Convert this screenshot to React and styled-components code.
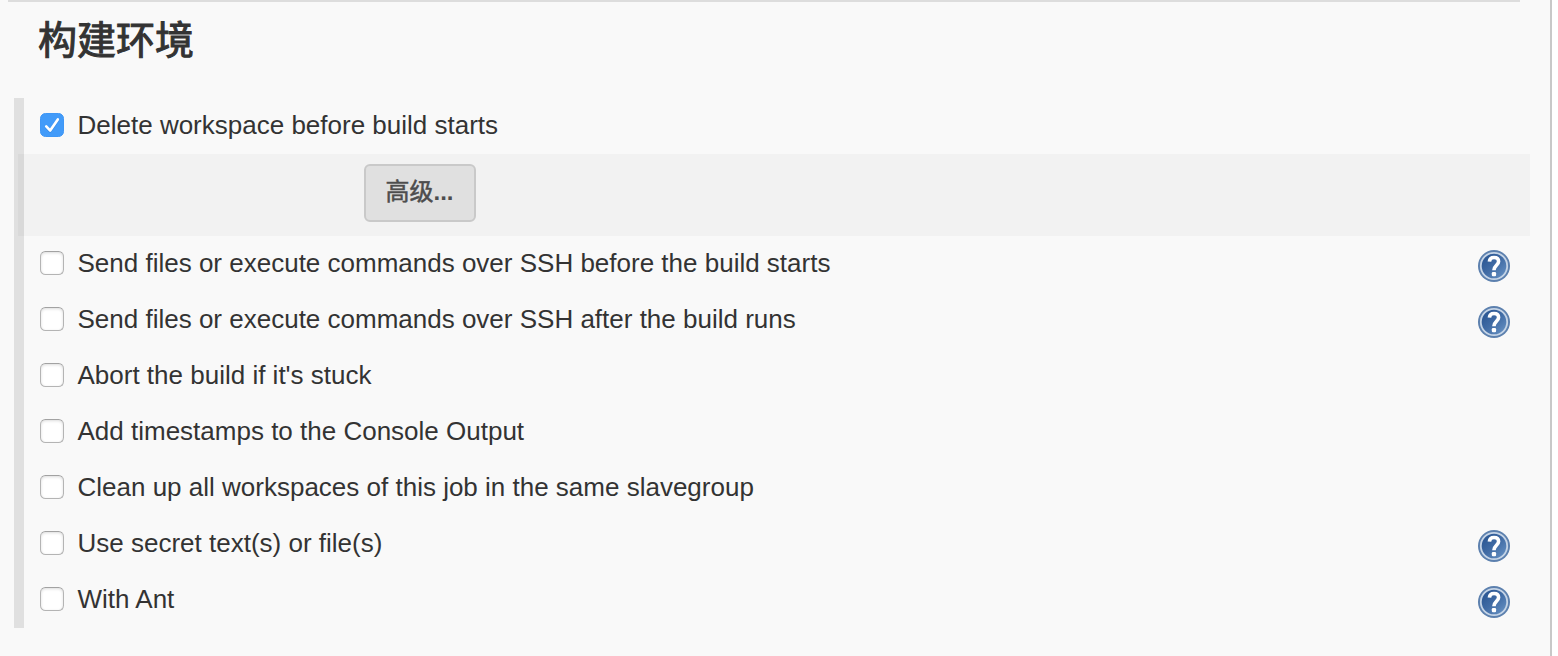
import React, { useState } from 'react';
import styled, { createGlobalStyle } from 'styled-components';

const GlobalStyle = createGlobalStyle`
  body {
    margin: 0;
    background: #fff;
    overflow: hidden;
  }

  * {
    box-sizing: border-box;
  }
`;

const Page = styled.main`
  width: 1552px;
  height: 656px;
  background: #f9f9f9;
  border-right: 2px solid #c8c8c8;
  color: #333;
  font-family: "Liberation Sans", "Noto Sans CJK SC", sans-serif;
`;

const Divider = styled.div`
  width: 1512px;
  height: 2px;
  margin-left: 8px;
  background: #ddd;
`;

const Title = styled.h2`
  height: 96px;
  margin: 0;
  padding: 7px 0 0 38px;
  font-family: "Noto Sans CJK SC", sans-serif;
  font-size: 39px;
  font-weight: 400;
  line-height: 56px;
  -webkit-text-stroke: 1px #333;
`;

const Options = styled.section`
  width: 1516px;
  margin-left: 14px;
  border-left: 10px solid #e0e0e0;
`;

const Row = styled.div`
  display: flex;
  align-items: center;
  justify-content: space-between;
  height: 56px;
  padding: 0 20px 0 16px;
`;

const Label = styled.label`
  display: flex;
  align-items: center;
  gap: 13.5px;
  padding-bottom: 2px;
  font-size: 26px;
  line-height: 30px;
  white-space: nowrap;
  cursor: pointer;
`;

const Checkbox = styled.input`
  appearance: none;
  flex: none;
  width: 24px;
  height: 24px;
  margin: 0;
  border: 1px solid #b4b4b4;
  border-top-color: #a2a2a2;
  border-radius: 5.5px;
  background: #fff;
  box-shadow: inset 0 1px 3px rgba(0, 0, 0, .14);

  &:checked {
    border-color: #3f97f6;
    background: #429bf9 url("data:image/svg+xml,%3Csvg xmlns='http://www.w3.org/2000/svg' viewBox='0 0 22 22'%3E%3Cpath d='M5.2 12.4 9.2 16.6 16.8 5.4' fill='none' stroke='%23206fc9' stroke-opacity='.35' stroke-width='2.6' stroke-linecap='round' stroke-linejoin='round' transform='translate(0 1)'/%3E%3Cpath d='M5.2 12.4 9.2 16.6 16.8 5.4' fill='none' stroke='white' stroke-width='2.6' stroke-linecap='round' stroke-linejoin='round'/%3E%3C/svg%3E");
    box-shadow: none;
  }
`;

const Advanced = styled.div`
  height: 82px;
  margin-left: -6px;
  padding: 10px 0 0 346px;
  background: rgba(0, 0, 0, .026);
`;

const Button = styled.button`
  display: block;
  width: 112px;
  height: 58px;
  padding: 0 1px 4px 0;
  border: 2px solid #c9c9c9;
  border-radius: 6px;
  background: #e0e0e0;
  color: #4d4d4d;
  font-family: "Noto Sans CJK SC", sans-serif;
  font-size: 24px;
  font-weight: 400;
  line-height: 36px;
  -webkit-text-stroke: .5px #4d4d4d;
  cursor: pointer;
`;

const Dots = styled.span`
  font-family: "Liberation Sans", sans-serif;
  font-weight: 700;
  -webkit-text-stroke: 0;
`;

const Help = styled.a`
  display: block;
  width: 32px;
  height: 32px;
  margin-top: 4px;
  cursor: pointer;
`;

const options = [
  { name: 'Send files or execute commands over SSH before the build starts', help: true },
  { name: 'Send files or execute commands over SSH after the build runs', help: true },
  { name: "Abort the build if it's stuck" },
  { name: 'Add timestamps to the Console Output' },
  { name: 'Clean up all workspaces of this job in the same slavegroup' },
  { name: 'Use secret text(s) or file(s)', help: true },
  { name: 'With Ant', help: true },
];

function HelpIcon() {
  return (
    <Help title="Help">
      <svg width="32" height="32" viewBox="0 0 32 32">
        <defs>
          <linearGradient id="disc" x1="0" y1="0" x2="1" y2="1">
            <stop offset="0" stopColor="#234f8d" />
            <stop offset=".5" stopColor="#416ca5" />
            <stop offset="1" stopColor="#6d98c9" />
          </linearGradient>
        </defs>
        <circle cx="16" cy="16" r="16" fill="#5c80ae" />
        <circle cx="16" cy="16" r="13.2" fill="url(#disc)" stroke="#c5d4e6" strokeWidth="1.8" />
        <path d="M11.4 11.6c.2-2.8 2-4.1 4.6-4.1 2.8 0 4.6 1.5 4.6 4 0 3.6-4.7 4-4.7 8.7" fill="none" stroke="#fff" strokeWidth="3.6" />
        <rect x="13.8" y="22" width="4.3" height="4.2" rx="1.2" fill="#fff" />
      </svg>
    </Help>
  );
}

function Option({ name, help, defaultChecked = false }) {
  const [checked, setChecked] = useState(defaultChecked);

  return (
    <Row>
      <Label>
        <Checkbox type="checkbox" checked={checked} onChange={() => setChecked(!checked)} />
        {name}
      </Label>
      {help && <HelpIcon />}
    </Row>
  );
}

function App() {
  return (
    <>
      <GlobalStyle />
      <Page>
        <Divider />
        <Title>构建环境</Title>
        <Options>
          <Option name="Delete workspace before build starts" defaultChecked />
          <Advanced>
            <Button type="button">高级<Dots>...</Dots></Button>
          </Advanced>
          {options.map(o => <Option key={o.name} {...o} />)}
        </Options>
      </Page>
    </>
  );
}

export default App;
